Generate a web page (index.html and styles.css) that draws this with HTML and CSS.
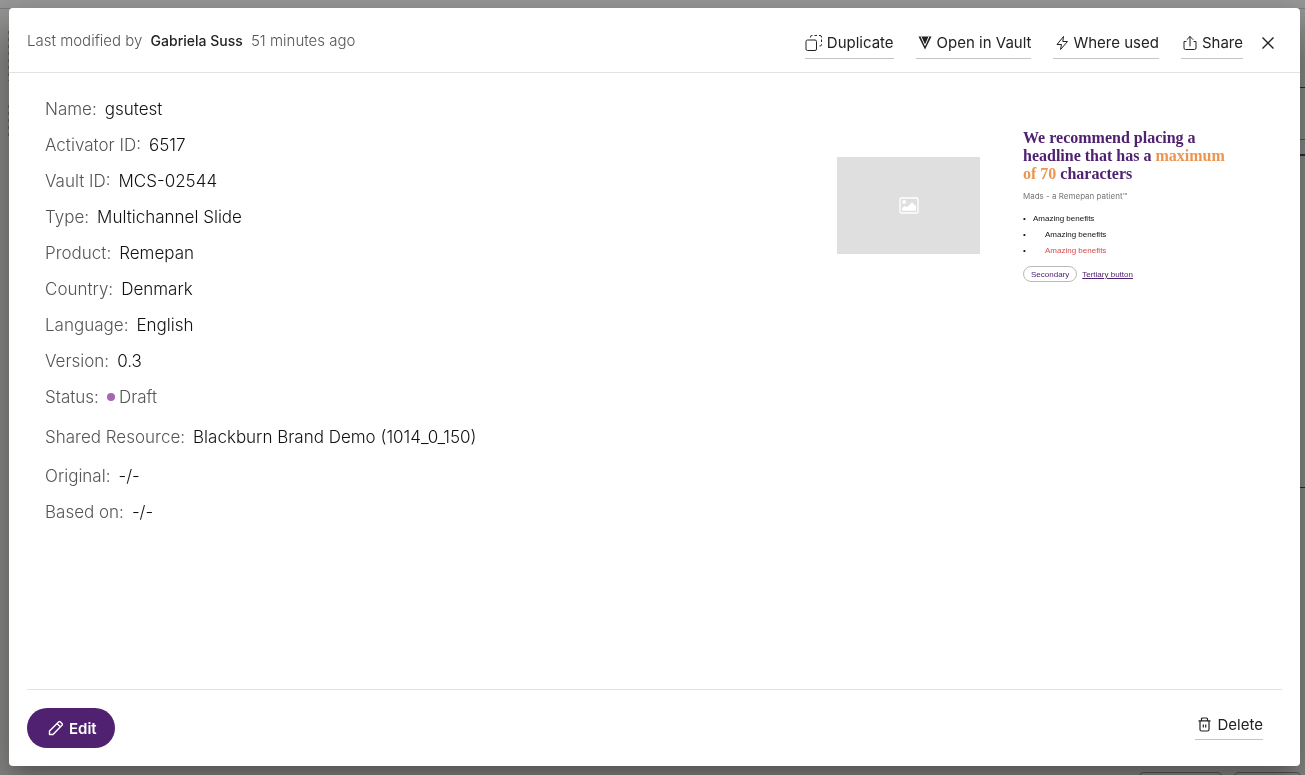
FILE: index.html
```html
<!DOCTYPE html>
<html lang="en">
<head>
<meta charset="utf-8">
<title>gsutest</title>
<link rel="stylesheet" href="styles.css">
</head>
<body>
<div class="page-behind" aria-hidden="true">
  <span class="topbar-line"></span>
  <span class="edge-text edge-text-a"></span>
  <span class="edge-text edge-text-b"></span>
  <span class="field-line field-line-top"></span>
  <span class="link-end"></span>
  <span class="field-line field-line-bottom"></span>
  <span class="ghost-button ghost-button-a"></span>
  <span class="ghost-button ghost-button-b"></span>
</div>
<main class="dialog" role="dialog" aria-label="Slide details">
  <header class="dialog-header">
    <p class="modified">Last modified by <strong>Gabriela Suss</strong> <span>51 minutes ago</span></p>
    <div class="actions">
      <button class="action action-duplicate" type="button">
        <svg width="18" height="18" viewBox="0 0 18 18" fill="none" stroke="currentColor"><rect x="1" y="6" width="10.5" height="10.5" rx="1.5"/><path d="M5.5 3.5V3Q5.5 1.5 7 1.5H7.5M9.5 1.5h2.5M14 1.5h1Q16.5 1.5 16.5 3v.5M16.5 5.500v2.500M16.500 10v.5Q16.500 12 15 12h-.5"/></svg>
        Duplicate
      </button>
      <button class="action action-vault" type="button">
        <svg width="14" height="14" viewBox="0 0 14 14"><path fill="currentColor" d="M.5.5h13L7 13.500z"/><path d="M3 .5 7 9.500 11 .5" fill="none" stroke="#fff" stroke-width="1"/></svg>
        Open in Vault
      </button>
      <button class="action action-where" type="button">
        <svg width="14" height="16" viewBox="0 0 14 16" fill="none" stroke="currentColor" stroke-linejoin="round"><path d="M8.500 1.500 2 9.500h4.500L5.500 14.500 12.500 6.500H7.800z"/></svg>
        Where used
      </button>
      <button class="action action-share" type="button">
        <svg width="14" height="16" viewBox="0 0 14 16" fill="none" stroke="currentColor" stroke-linecap="round" stroke-linejoin="round"><path d="M3 6.500H1V13q0 1.500 1.500 1.500h9q1.500 0 1.500-1.500V6.500h-2M7 11V1.500M4 4.500l3-3 3 3"/></svg>
        Share
      </button>
      <button class="close" type="button" aria-label="Close">
        <svg width="12" height="12" viewBox="0 0 12 12" fill="none" stroke="currentColor" stroke-width="1.400"><path d="M.5.5l11 11M11.500.5l-11 11"/></svg>
      </button>
    </div>
  </header>
  <div class="dialog-body">
    <dl class="details">
      <div class="row"><dt>Name:</dt><dd>gsutest</dd></div>
      <div class="row"><dt>Activator ID:</dt><dd>6517</dd></div>
      <div class="row"><dt>Vault ID:</dt><dd>MCS-02544</dd></div>
      <div class="row"><dt>Type:</dt><dd>Multichannel Slide</dd></div>
      <div class="row"><dt>Product:</dt><dd>Remepan</dd></div>
      <div class="row"><dt>Country:</dt><dd>Denmark</dd></div>
      <div class="row"><dt>Language:</dt><dd>English</dd></div>
      <div class="row"><dt>Version:</dt><dd>0.3</dd></div>
      <div class="row"><dt>Status:</dt><dd class="status">Draft</dd></div>
      <div class="row row-shared"><dt>Shared Resource:</dt><dd>Blackburn Brand Demo (1014_0_150)</dd></div>
      <div class="row"><dt>Original:</dt><dd>-/-</dd></div>
      <div class="row"><dt>Based on:</dt><dd>-/-</dd></div>
    </dl>
    <section class="slide" aria-label="Slide preview">
      <div class="placeholder">
        <svg width="20" height="17" viewBox="0 0 20 17"><rect x="1" y="1" width="18" height="15" rx="1" fill="none" stroke="#fff" stroke-width="1.300"/><circle cx="5.200" cy="5" r="1.900" fill="#fff"/><path d="M3 13.800v-2.500l3-2.500 2 1.500 5-5 4 4v4.500z" fill="#fff"/></svg>
      </div>
      <div class="slide-text">
        <h2>
          <span class="line">We recommend placing a</span>
          <span class="line">headline that has a <em>maximum</em></span>
          <span class="line"><em>of 70</em> characters</span>
        </h2>
        <p class="caption">Mads - a Remepan patient™</p>
        <ul class="benefits">
          <li>Amazing benefits</li>
          <li class="nested">Amazing benefits</li>
          <li class="nested alert">Amazing benefits</li>
        </ul>
        <div class="slide-buttons">
          <button class="secondary" type="button">Secondary</button>
          <a class="tertiary" href="#">Tertiary button</a>
        </div>
      </div>
    </section>
  </div>
  <footer class="dialog-footer">
    <button class="edit" type="button">
      <svg width="16" height="16" viewBox="0 0 16 16" fill="none" stroke="currentColor" stroke-width="1.400" stroke-linejoin="round"><path d="M1.500 14.500v-3.500L10.800 1.700q.7-.5 1.400 0l2 2q.5.700 0 1.400L5 14.500zM9 3.500 12.500 7"/></svg>
      Edit
    </button>
    <button class="action action-delete" type="button">
      <svg width="13" height="15" viewBox="0 0 13 15" fill="none" stroke="currentColor" stroke-width="1.200"><path d="M.5 3.800h12M3.500 3.500V2q0-1 1-1h4q1 0 1 1v1.500M2 4v8.500q0 1.500 1.500 1.500h6q1.500 0 1.500-1.500V4M5.300 7.500v3M7.700 7.500v3"/></svg>
      Delete
    </button>
  </footer>
</main>
</body>
</html>
```
FILE: styles.css
```css
* { box-sizing: border-box; }

body {
  margin: 0;
  min-height: 100vh;
  display: flex;
  padding: 8px 5px 9px 9px;
  background: #858585;
  color: #222;
  font-family: Inter, "Liberation Sans", sans-serif;
  overflow: hidden;
}

button {
  font: inherit;
  color: inherit;
  background: none;
  border: 0;
  padding: 0;
  cursor: pointer;
}

svg { flex: none; display: block; }

.page-behind { position: fixed; inset: 0; background: linear-gradient(#989898, #848482 60px); }
.page-behind span { position: absolute; }
.topbar-line { top: 8px; left: 0; right: 0; height: 1px; background: #7c7c7c; }
.edge-text { left: 8px; width: 1px; background: repeating-linear-gradient(#6a5c5a 0 3px, #848482 3px 7px); }
.edge-text-a { top: 31px; height: 50px; }
.edge-text-b { top: 105px; height: 34px; }
.field-line { right: 0; width: 6px; height: 1px; background: #29243c; }
.field-line-top { top: 87px; }
.field-line-bottom { top: 487px; }
.link-end { top: 139px; right: 0; width: 5px; height: 17px; border-top: 1px solid #55475c; border-bottom: 2px solid #34213f; }
.ghost-button { bottom: -20px; height: 23px; border: 1px solid #555; border-radius: 6px; }
.ghost-button-a { right: 82px; width: 85px; }
.ghost-button-b { right: 3px; width: 69px; }

.dialog {
  position: relative;
  flex: 1;
  min-width: 0;
  display: flex;
  flex-direction: column;
  background: #fff;
  border-radius: 4px;
  box-shadow: 0 11px 15px -7px rgba(0, 0, 0, .2), 0 24px 38px 3px rgba(0, 0, 0, .14), 0 9px 46px 8px rgba(0, 0, 0, .12);
}

.dialog-header {
  display: flex;
  justify-content: space-between;
  align-items: flex-start;
  min-height: 65px;
  padding: 20px 26px 0 18px;
  border-bottom: 1px solid #e2e2e2;
}

.modified {
  margin: 0;
  font-size: 15px;
  font-weight: 300;
  line-height: 26px;
  color: #555;
}
.modified strong { margin: 0 4px; font-size: 14px; font-weight: 500; color: #222; }

.actions { display: flex; gap: 22px; }

.action {
  display: flex;
  align-items: center;
  gap: 5px;
  height: 31px;
  border-bottom: 1px solid #c4c4c4;
  font-size: 15px;
  line-height: 30px;
}
.action-duplicate { gap: 4px; }
.action-vault { padding-left: 2px; }
.action-where { padding-left: 2px; gap: 4px; }
.action-share { padding-left: 2px; }
.close { display: flex; align-items: center; height: 30px; margin-left: -3px; }

.dialog-body {
  flex: 1;
  display: flex;
  justify-content: space-between;
  padding: 18px 61px 18px 36px;
}

.details { margin: 0; font-size: 17px; font-weight: 300; }
.row { display: flex; align-items: center; gap: 8px; min-height: 36px; line-height: 24px; }
.row-shared { min-height: 43px; }
.row dt { color: #555; }
.row dd { margin: 0; color: #111; }
.row .status { display: flex; align-items: center; gap: 4px; color: #555; }
.status::before { content: ""; width: 8px; height: 8px; border-radius: 50%; background: #a468b0; }

.slide { display: flex; align-items: flex-start; gap: 43px; padding-top: 38px; }
.placeholder {
  display: grid;
  place-items: center;
  width: 143px;
  height: 97px;
  margin-top: 28px;
  background: #dfdfdf;
}
.slide-text { width: 216px; font-family: "Liberation Sans", Arial, sans-serif; font-size: 8px; }
.slide-text h2 {
  margin: 0;
  font: bold 16px/18px "Liberation Serif", serif;
  color: #4f2170;
}
.slide-text .line { display: block; }
.slide-text em { font-style: normal; color: #eb9550; }
.caption { margin: 8px 0 10px; font-family: Inter, sans-serif; line-height: 10px; color: #777; }
.benefits { margin: 0; padding: 0; list-style: none; line-height: 16px; color: #111; }
.benefits li { display: flex; }
.benefits li::before { content: "•"; width: 10px; }
.benefits .nested::before { width: 22px; }
.benefits .alert { color: #d94b4b; }
.benefits .alert::before { color: #111; }
.slide-buttons { display: flex; align-items: center; gap: 5px; margin-top: 7px; color: #4f2170; }
.secondary { height: 16px; padding: 0 7px; border: 1px solid #bbb; border-radius: 8px; }
.tertiary { color: inherit; }

.dialog-footer {
  display: flex;
  justify-content: space-between;
  align-items: flex-start;
  margin: 0 18px;
  padding: 18px 19px 18px 0;
  border-top: 1px solid #e2e2e2;
}
.edit {
  display: flex;
  align-items: center;
  gap: 5px;
  height: 40px;
  padding: 0 18px 0 21px;
  border-radius: 20px;
  background: #4f2170;
  color: #fff;
  font-size: 15px;
  font-weight: 600;
}
.action-delete { margin-top: 2px; height: 30px; padding-left: 3px; gap: 7px; line-height: 29px; }
```
